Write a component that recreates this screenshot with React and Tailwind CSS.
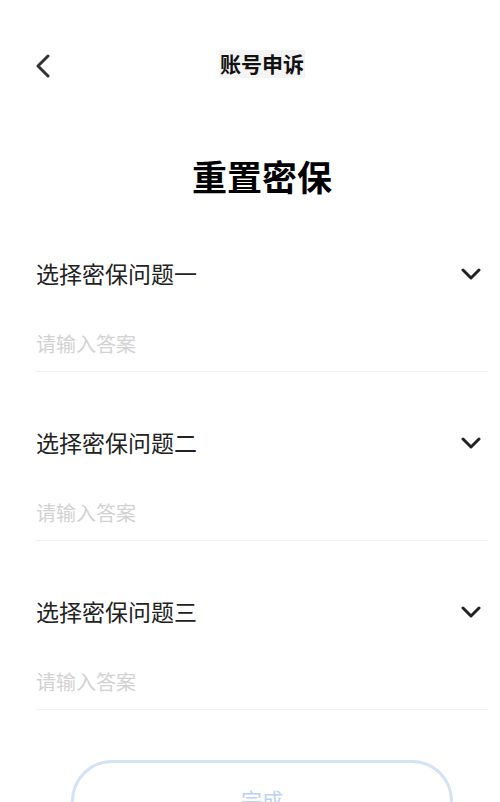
import React, { useState } from 'react';

const questions = ['选择密保问题一', '选择密保问题二', '选择密保问题三'];

const ChevronLeft = () => (
  <svg width="16" height="24" viewBox="0 0 16 24" fill="none">
    <path d="M13 2L3 12l10 10" stroke="#333" strokeWidth="3" strokeLinecap="round" strokeLinejoin="round" />
  </svg>
);

const ChevronDown = () => (
  <svg width="20" height="14" viewBox="0 0 20 14" fill="none">
    <path d="M2 3l8 8 8-8" stroke="#222" strokeWidth="3" strokeLinecap="round" strokeLinejoin="round" />
  </svg>
);

const App = () => {
  const [answers, setAnswers] = useState(['', '', '']);

  const handleChange = (i, value) => {
    const next = [...answers];
    next[i] = value;
    setAnswers(next);
  };

  return (
    <div
      className="min-h-screen overflow-hidden bg-white"
      style={{ fontFamily: '"Noto Sans", "Noto Sans CJK SC", sans-serif' }}
    >
      {/* header */}
      <div className="relative flex h-[128px] items-center justify-center pl-[24px]">
        <button className="absolute left-[35px] top-[54px]">
          <ChevronLeft />
        </button>
        <h1 className="bg-[#f4f4f4] px-[1px] text-[21px] font-bold leading-[28px] text-[#111]">账号申诉</h1>
      </div>

      <h2 className="mt-[30px] pl-[24px] text-center text-[35px] font-bold leading-[40px] text-black">重置密保</h2>

      <div className="mt-[52px] pl-[36px] pr-[12px]">
        {questions.map((q, i) => (
          <div key={q} className={i > 0 ? 'mt-[47px]' : ''}>
            <div className="flex h-[48px] items-center justify-between pr-[7px]">
              <span className="text-[23px] leading-[30px] text-[#222]">{q}</span>
              <ChevronDown />
            </div>
            <div className="mt-[26px] border-b border-[#f1f1f1] pb-[7px]">
              <input
                type="text"
                value={answers[i]}
                onChange={(e) => handleChange(i, e.target.value)}
                placeholder="请输入答案"
                className="h-[40px] w-full bg-transparent text-[20px] text-[#333] outline-none placeholder-[#d2d2d2]"
              />
            </div>
          </div>
        ))}

        <button className="mx-[35px] mt-[50px] flex h-[82px] w-[382px] items-center justify-center rounded-full border-[3px] border-[#d3e2f6] text-[21px] text-[#bcd1f0]">
          完成
        </button>
      </div>
    </div>
  );
};

export default App;
